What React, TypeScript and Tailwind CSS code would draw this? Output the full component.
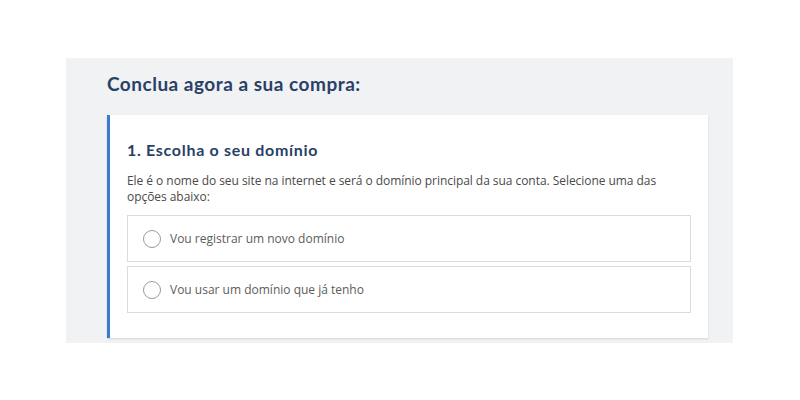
export default function App() {
  return (
    <div className="h-[400px] w-[800px] bg-white pt-[58px] pl-[66px] font-['Lato',sans-serif]">
      <section className="h-[285px] w-[667px] bg-[#f1f2f4] pl-[41px] pr-[25px] pt-[14px]">
        <h1 className="text-[19px] font-bold leading-[24px] tracking-[0.5px] text-[#2a3f66]">
          Conclua agora a sua compra:
        </h1>

        <div className="mt-[19px] h-[223px] border-l-[3px] border-[#3b7cd3] bg-white pl-[17px] pr-[17px] pt-[25px] shadow-[0_1px_2px_rgba(0,0,0,0.12)]">
          <h2 className="text-[16px] font-bold leading-[20px] tracking-[0.7px] text-[#2a3f66]">
            1. Escolha o seu domínio
          </h2>
          <p className="mt-[13px] font-['Open_Sans',sans-serif] text-[12px] leading-[16px] tracking-[-0.05px] text-[#4a4a4a]">
            Ele é o nome do seu site na internet e será o domínio principal da sua conta. Selecione uma das
            <br />
            opções abaixo:
          </p>

          <div className="mt-[10px] flex flex-col gap-[4px]">
            <Option label="Vou registrar um novo domínio" />
            <Option label="Vou usar um domínio que já tenho" />
          </div>
        </div>
      </section>
    </div>
  );
}

function Option({ label }: { label: string }) {
  return (
    <label className="flex h-[47px] items-center gap-[9px] border border-[#dcdcdc] bg-white pl-[15px]">
      <span className="h-[18px] w-[18px] rounded-full border border-[#9a9a9a] bg-white" />
      <span className="font-['Open_Sans',sans-serif] text-[12px] text-[#5c5c5c]">{label}</span>
    </label>
  );
}
